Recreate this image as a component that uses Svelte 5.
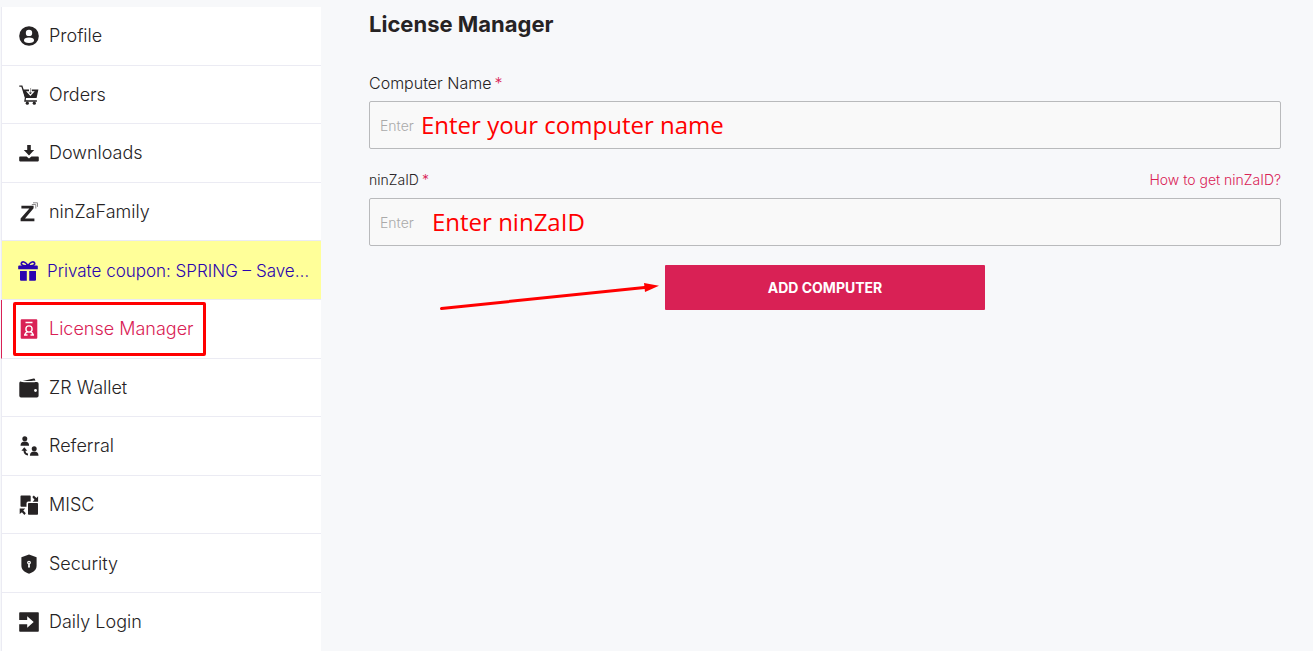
<script lang="ts">
    interface MenuItem {
        id: string,
        label: string
    }
    const menu: Array<MenuItem> = [
        { id: 'profile', label: 'Profile' },
        { id: 'orders', label: 'Orders' },
        { id: 'downloads', label: 'Downloads' },
        { id: 'family', label: 'ninZaFamily' },
        { id: 'coupon', label: 'Private coupon: SPRING – Save…' },
        { id: 'license', label: 'License Manager' },
        { id: 'wallet', label: 'ZR Wallet' },
        { id: 'referral', label: 'Referral' },
        { id: 'misc', label: 'MISC' },
        { id: 'security', label: 'Security' },
        { id: 'login', label: 'Daily Login' }
    ]
    let active: string = $state('license')
    let computerName: string = $state('')
    let ninzaId: string = $state('')

    const select = (e: Event, id: string) => {
        e.preventDefault()
        active = id
    }
    const addComputer = (e: Event) => {
        e.preventDefault()
        computerName = ''
        ninzaId = ''
    }
</script>

<div class="page">
    <nav class="sidebar">
        {#each menu as item}
            <a
                href="#{item.id}"
                class="item"
                class:coupon={item.id === 'coupon'}
                class:active={item.id === active}
                onclick={(e) => select(e, item.id)}
            >
                <svg class="icon" viewBox="0 0 20 20" aria-hidden="true">
                    {#if item.id === 'profile'}
                        <circle cx="10" cy="10" r="9.8" />
                        <circle class="hole" cx="10" cy="6.9" r="3.2" />
                        <ellipse class="hole" cx="10" cy="14.3" rx="5" ry="2.7" />
                    {:else if item.id === 'orders'}
                        <path class="line" d="M.3 1.2h2.6l3.600 11.400-.6 3.400h12" />
                        <path d="M3.800 4.400h15.600l-1.800 8.700H6.200z" />
                        <path class="drop" d="M10.600 2.500h1.600v4.300h2.200l-3 3.300-3-3.300h2.200z" />
                        <circle cx="8.3" cy="18.200" r="1.6" />
                        <circle cx="15.3" cy="18.200" r="1.6" />
                    {:else if item.id === 'downloads'}
                        <path d="M8.2 2h3.6v5h3.4L10 12.4 4.8 7h3.4z" />
                        <path d="M1 13.6h6.6L10 15.4l2.4-1.8H19q.8 0 .8.8v3.2q0 .8-.8.8H1q-.8 0-.8-.8v-3.2q0-.8.8-.8z" />
                    {:else if item.id === 'family'}
                        <path d="M2.4 3.7h12.2v2.6L6 16.4h9.4v2.800H1.6v-2.8L10.4 6.4h-8z" />
                        <path class="faint" d="M12.8 2.5h4v4M14 .8h4.5v4" />
                    {:else if item.id === 'coupon'}
                        <path class="ribbon" d="M10 5C7.5 0 3.3 0 3.3 2.8c0 1.8 2 2.2 6.7 2.2 4.7 0 6.7-.4 6.7-2.2C16.7 0 12.5 0 10 5z" />
                        <path d="M1.2 4.5h17.6q1 0 1 1v2.7H.2V5.5q0-1 1-1z" />
                        <path d="M2 10h6.8v9.8H3q-1 0-1-1zM11.2 10H18v8.800q0 1-1 1h-5.8z" />
                    {:else if item.id === 'license'}
                        <path d="M2.7.2h14.6q1 0 1 1v17.600q0 1-1 1H2.7q-1 0-1-1V1.2q0-1 1-1z" />
                        <path class="cut" d="M6.500 3.500h7M5.800 15.800c.3-1.700 1.300-2.500 2.700-3M14.200 15.800c-.3-1.700-1.300-2.500-2.700-3M5 16h3.500M11.500 16H15" />
                        <circle class="cut" cx="10" cy="10" r="3.100" />
                    {:else if item.id === 'wallet'}
                        <path d="M1.5 3.6L14.7.5q1.1-.2 1.3.8l.3 1.700H3.5q-1.3 0-1.3 1h15.6q1.8 0 1.8 1.7v12q0 1.7-1.7 1.7H2Q.3 19.400.3 17.700V5.3q0-1.4 1.2-1.7z" />
                        <path class="hole" d="M3.300 4.300l12.400-1.700.2 1.700z" />
                        <circle class="hole" cx="16.5" cy="12.5" r="1.4" />
                    {:else if item.id === 'referral'}
                        <circle cx="5.8" cy="2.7" r="2.5" />
                        <path d="M1.5 9.7c0-3 1.7-4.2 4.3-4.2s4.3 1.2 4.3 4.2z" />
                        <circle cx="15.2" cy="12.7" r="2.5" />
                        <path d="M10.9 19.7c0-3 1.7-4.2 4.3-4.2s4.3 1.2 4.3 4.2z" />
                        <path d="M5.3 11.300l3 3.500H6.5c.1 1.6.9 2.5 2.5 2.8v1.8c-2.9-.3-4.5-1.8-4.5-4.600H2.4z" />
                    {:else if item.id === 'misc'}
                        <path d="M2.3.5h8.600q.8 0 .8.8v5.300H9.2q-1.7 0-1.7 1.7v3.5H2.3q-.8 0-.8-.8V1.3q0-.8.8-.8z" />
                        <path d="M9.8 8.1h8.400q.8 0 .8.8v10q0 .8-.8.8H9.8q-.8 0-.8-.8v-10q0-.8.8-.8z" />
                        <path d="M14.8.4l2.6 2.500 1.700-1.700v5.500h-5.500l1.900-1.900L13.3 2zM5.4 19.9l-2.500-2.600-2.200 1.800v-5.500h5.500l-1.900 2 2.500 2.600z" />
                    {:else if item.id === 'security'}
                        <path d="M10 .5l7.6 2.800v8.200c0 4-2.7 6.7-7.6 8.200-4.9-1.5-7.600-4.2-7.600-8.200V3.300z" />
                        <circle class="hole" cx="10" cy="8.6" r="1.9" />
                        <path class="hole" d="M9.3 9.800h1.400l.3 3.600H9z" />
                        <circle cx="10" cy="8.6" r=".7" />
                    {:else}
                        <path d="M1 .3h18q.8 0 .8.8v17.800q0 .8-.8.8H1q-.8 0-.8-.8v-6.700h8v3.500l6.500-5.700-6.500-5.700V8h-8V1.100Q.2.300 1 .3z" />
                    {/if}
                </svg>
                <span class="label">{item.label}</span>
                {#if item.id === 'license'}
                    <span class="frame"></span>
                {/if}
            </a>
        {/each}
    </nav>

    <main>
        <h1>License Manager</h1>
        <form onsubmit={addComputer}>
            <div class="row">
                <label for="computer" class="big">Computer Name <span class="star">*</span></label>
            </div>
            <div class="field">
                <input id="computer" type="text" placeholder="Enter" bind:value={computerName} />
                <span class="note first">Enter your computer name</span>
            </div>

            <div class="row">
                <label for="ninza">ninZaID <span class="star">*</span></label>
                <a href="#help" class="help">How to get ninZaID?</a>
            </div>
            <div class="field">
                <input id="ninza" type="text" placeholder="Enter" bind:value={ninzaId} />
                <span class="note second">Enter ninZaID</span>
            </div>

            <div class="submit">
                <svg class="arrow" viewBox="0 0 220 28" aria-hidden="true">
                    <path class="shaft" d="M2.5 25.5L208 4.200" />
                    <path d="M205 0l15 2.700-14 6.300z" />
                </svg>
                <button type="submit">ADD COMPUTER</button>
            </div>
        </form>
    </main>
</div>

<style>
    :global(body) {
        background: #f7f8fa;
    }
    .page {
        display: flex;
        box-sizing: border-box;
        min-height: 100vh;
        font-family: Inter, "Liberation Sans", sans-serif;
        font-weight: 300;
        color: #262324;
    }
    .page a {
        text-decoration: none;
    }
    .sidebar {
        display: flex;
        flex-direction: column;
        flex: none;
        width: 320px;
        margin: 7px 0 0 1px;
        background: #fff;
    }
    .item {
        position: relative;
        display: flex;
        flex: 1;
        align-items: center;
        gap: 10px;
        box-sizing: border-box;
        min-height: 58px;
        padding: 1px 16px 0 17px;
        border-left: 1px solid #ebebf3;
        border-bottom: 1px solid #ebebf3;
        color: #262324;
        font-size: 18px;
        line-height: 24px;
    }
    .item:last-child {
        border-bottom: 0;
    }
    .icon {
        flex: none;
        width: 20px;
        height: 20px;
        fill: currentColor;
    }
    .label {
        white-space: nowrap;
    }
    .hole {
        fill: #fff;
    }
    .line {
        fill: none;
        stroke: currentColor;
        stroke-width: 1.3;
    }
    .drop {
        stroke: #fff;
        stroke-width: 1.2;
    }
    .faint {
        fill: none;
        stroke: #8d8b8c;
        stroke-width: 1;
    }
    .ribbon {
        fill: none;
        stroke: currentColor;
        stroke-width: 1.7;
    }
    .cut {
        fill: none;
        stroke: #fff;
        stroke-width: 1.4;
    }
    .coupon {
        gap: 9px;
        padding-left: 16px;
        background: #ffff99;
        color: #2a04b0;
        font-size: 17px;
    }
    .active {
        border-left-color: #d92155;
        color: #d92155;
    }
    .frame {
        position: absolute;
        top: 2px;
        left: 11px;
        box-sizing: border-box;
        width: 193px;
        height: 54px;
        border: 3px solid #f00;
        border-radius: 2px;
    }
    main {
        flex: 1;
        padding: 9px 32px 24px 48px;
    }
    h1 {
        margin: 0 0 32px;
        font-size: 22px;
        line-height: 30px;
        font-weight: 700;
    }
    .row {
        display: flex;
        justify-content: space-between;
        margin-bottom: 6px;
        font-size: 14px;
        line-height: 24px;
    }
    label {
        display: flex;
        gap: 3px;
    }
    .big {
        font-size: 16px;
    }
    .star, .help {
        color: #d92155;
    }
    .field {
        position: relative;
        margin-bottom: 19px;
    }
    input {
        display: block;
        box-sizing: border-box;
        width: 100%;
        height: 48px;
        padding: 0 10px;
        border: 1px solid #b9babc;
        border-radius: 2px;
        background: #f9f9f9;
        color: #262324;
        font-family: inherit;
        font-size: 14px;
        font-weight: 300;
    }
    input::placeholder {
        color: #aaa;
    }
    .note {
        position: absolute;
        top: 8px;
        color: #f00;
        font-family: "Open Sans", "Noto Sans", sans-serif;
        font-size: 24px;
        font-weight: 400;
        line-height: 32px;
        white-space: nowrap;
        pointer-events: none;
    }
    .first {
        left: 52px;
    }
    .second {
        left: 63px;
    }
    .submit {
        position: relative;
        display: flex;
        justify-content: center;
    }
    .arrow {
        position: absolute;
        top: 18px;
        right: calc(50% + 166px);
        width: 220px;
        height: 28px;
        fill: #f00;
    }
    .shaft {
        stroke: #f00;
        stroke-width: 3;
        stroke-linecap: round;
    }
    button {
        width: 320px;
        height: 45px;
        border: 0;
        border-radius: 1px;
        background: #d92155;
        color: #fff;
        font-family: inherit;
        font-size: 14px;
        font-weight: 700;
        cursor: pointer;
    }
</style>
